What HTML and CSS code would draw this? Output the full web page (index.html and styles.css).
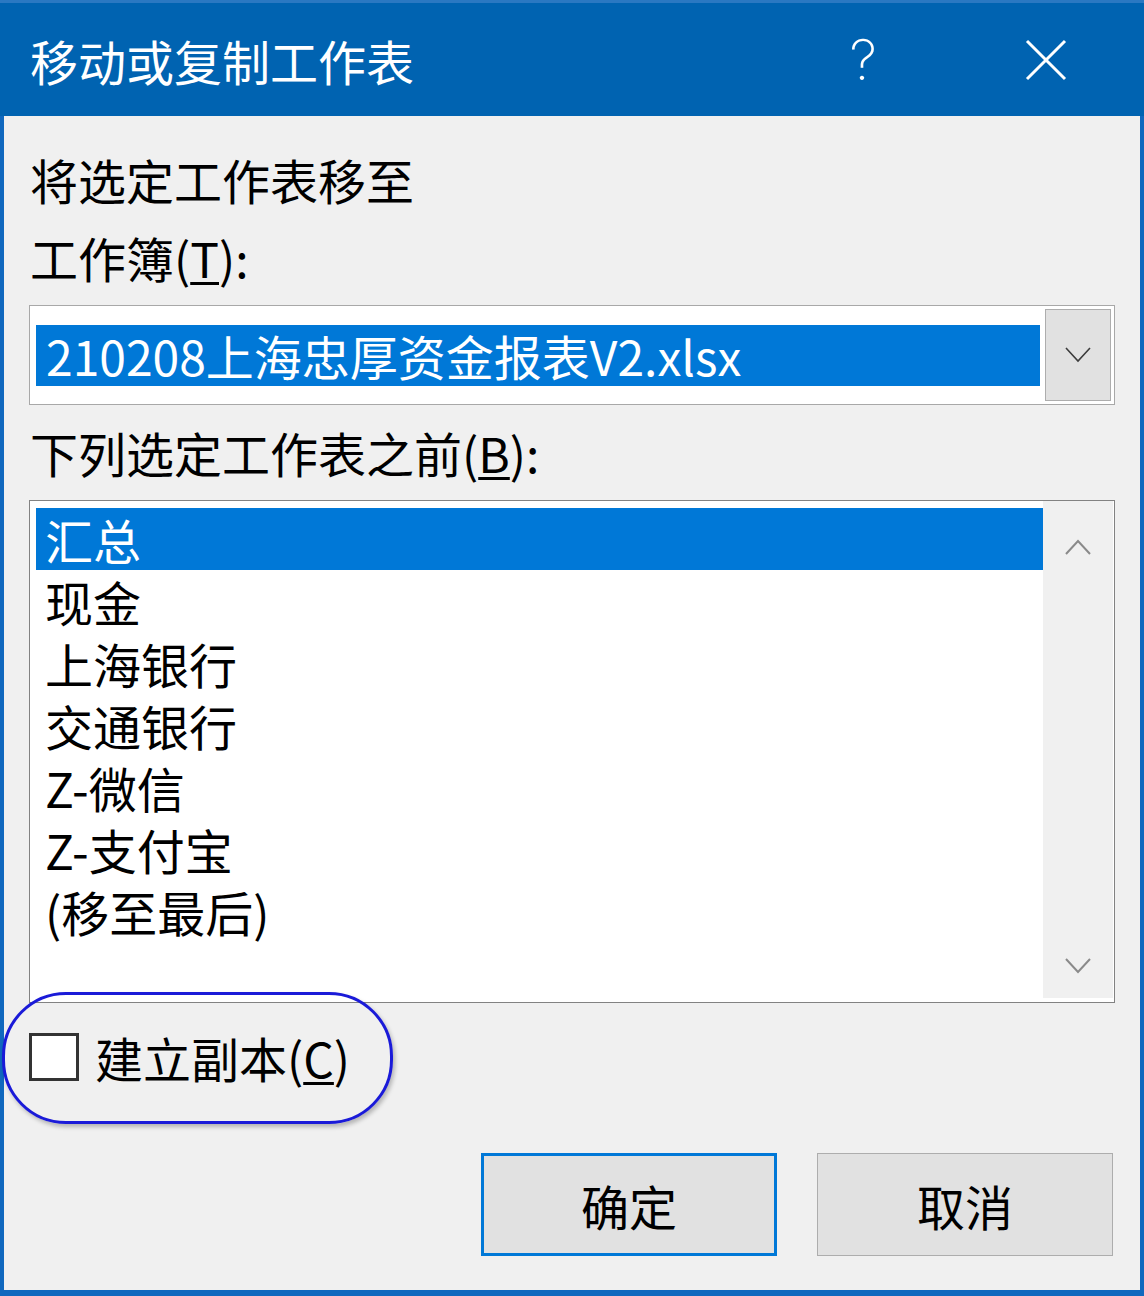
FILE: index.html
```html
<!DOCTYPE html>
<html lang="zh-CN">
<head>
  <meta charset="UTF-8">
  <title>移动或复制工作表</title>
  <link rel="stylesheet" href="styles.css">
</head>
<body>
  <div class="window">
    <div class="titlebar">
      <span class="title">移动或复制工作表</span>
      <span class="help">?</span>
      <svg class="close" width="42" height="42" viewBox="0 0 42 42">
        <path d="M2 2 L40 40 M40 2 L2 40" stroke="#fff" stroke-width="3" fill="none"/>
      </svg>
    </div>

    <div class="content">
      <div class="label first">将选定工作表移至</div>
      <div class="label">工作簿(<u>T</u>):</div>

      <div class="combo">
        <div class="combo-value">210208上海忠厚资金报表V2.xlsx</div>
        <div class="combo-btn">
          <svg width="26" height="16" viewBox="0 0 26 16">
            <path d="M1 1 L13 14 L25 1" stroke="#3c3c3c" stroke-width="1.6" fill="none"/>
          </svg>
        </div>
      </div>

      <div class="label third">下列选定工作表之前(<u>B</u>):</div>

      <div class="listbox">
        <ul class="items">
          <li class="selected">汇总</li>
          <li>现金</li>
          <li>上海银行</li>
          <li>交通银行</li>
          <li>Z-微信</li>
          <li>Z-支付宝</li>
          <li>(移至最后)</li>
        </ul>
        <div class="scrollbar">
          <svg width="26" height="16" viewBox="0 0 26 16">
            <path d="M1 15 L13 2 L25 15" stroke="#8a8a8a" stroke-width="2" fill="none"/>
          </svg>
          <svg width="26" height="16" viewBox="0 0 26 16">
            <path d="M1 1 L13 14 L25 1" stroke="#8a8a8a" stroke-width="2" fill="none"/>
          </svg>
        </div>
      </div>

      <label class="check-row">
        <span class="checkbox"></span>
        <span class="check-text">建立副本(<u>C</u>)</span>
      </label>

      <div class="buttons">
        <button class="btn default">确定</button>
        <button class="btn">取消</button>
      </div>
    </div>

    <!-- hand-drawn highlight around the checkbox -->
    <div class="mark"></div>
  </div>
</body>
</html>
```

FILE: styles.css
```css
* { box-sizing: border-box; }
body {
  margin: 0;
  font-family: "Noto Sans CJK SC", "Liberation Sans", sans-serif;
  color: #000;
}
.window {
  position: relative;
  width: 1144px;
  height: 1296px;
  background: #f0f0f0;
  border: 4px solid #1068be;
  border-top: 0;
  border-bottom-width: 6px;
  display: flex;
  flex-direction: column;
}
.titlebar {
  height: 116px;
  margin: 0 -4px;
  background: #0063b1;
  border-top: 3px solid #2a78c2;
  display: flex;
  align-items: center;
  color: #fff;
  padding-left: 30px;
}
.title {
  font-size: 48px;
  line-height: 60px;
  flex: 1;
}
.help {
  font-family: Inter, "Liberation Sans", sans-serif;
  font-weight: 200;
  font-size: 56px;
  line-height: 60px;
  margin-right: 148px;
}
.close {
  margin-right: 77px;
}
.content {
  padding: 0 25px;
  display: flex;
  flex-direction: column;
}
.label {
  font-size: 48px;
  line-height: 64px;
  padding-left: 1px;
  margin-top: 14px;
}
.label.first { margin-top: 31px; }
.label.third { margin-top: 15px; }
u { text-decoration-thickness: 3px; text-underline-offset: 4px; }

.combo {
  margin-top: 16px;
  height: 100px;
  background: #fff;
  border: 1px solid #a8a8a8;
  padding: 3px 3px 3px 6px;
  display: flex;
  align-items: center;
  gap: 5px;
}
.combo-value {
  flex: 1;
  height: 61px;
  background: #0078d7;
  color: #fff;
  font-size: 48px;
  line-height: 61px;
  padding-left: 10px;
  white-space: nowrap;
}
.combo-btn {
  width: 66px;
  align-self: stretch;
  background: #e1e1e1;
  border: 1px solid #adadad;
  display: flex;
  align-items: center;
  justify-content: center;
}

.listbox {
  margin-top: 16px;
  height: 503px;
  background: #fff;
  border: 1px solid #828282;
  display: flex;
}
.items {
  list-style: none;
  margin: 0;
  padding: 7px 0 0 6px;
  flex: 1;
}
.items li {
  height: 62px;
  font-size: 48px;
  line-height: 62px;
  padding-left: 9px;
}
.items li.selected {
  background: #0078d7;
  color: #fff;
}
.scrollbar {
  width: 70px;
  margin: 0 1px 4px 0;
  background: #f0f0f0;
  display: flex;
  flex-direction: column;
  justify-content: space-between;
  align-items: center;
  padding: 38px 0 24px;
}

.check-row {
  margin-top: 24px;
  display: flex;
  align-items: center;
  gap: 16px;
}
.checkbox {
  width: 50px;
  height: 48px;
  border: 3px solid #333;
  background: #fff;
}
.check-text {
  font-size: 48px;
  line-height: 60px;
}

.buttons {
  margin-top: 66px;
  display: flex;
  justify-content: flex-end;
  gap: 40px;
  padding-right: 2px;
}
.btn {
  width: 296px;
  height: 103px;
  background: #e1e1e1;
  border: 1px solid #adadad;
  font-family: inherit;
  font-size: 48px;
  color: #000;
  padding: 0;
}
.btn.default {
  border: 3px solid #0078d7;
}

.mark {
  position: absolute;
  left: -2px;
  top: 992px;
  width: 391px;
  height: 132px;
  border: 3px solid #1a1ad8;
  border-radius: 64px;
  box-shadow: 2px 3px 4px rgba(0, 0, 0, 0.25);
}
```
